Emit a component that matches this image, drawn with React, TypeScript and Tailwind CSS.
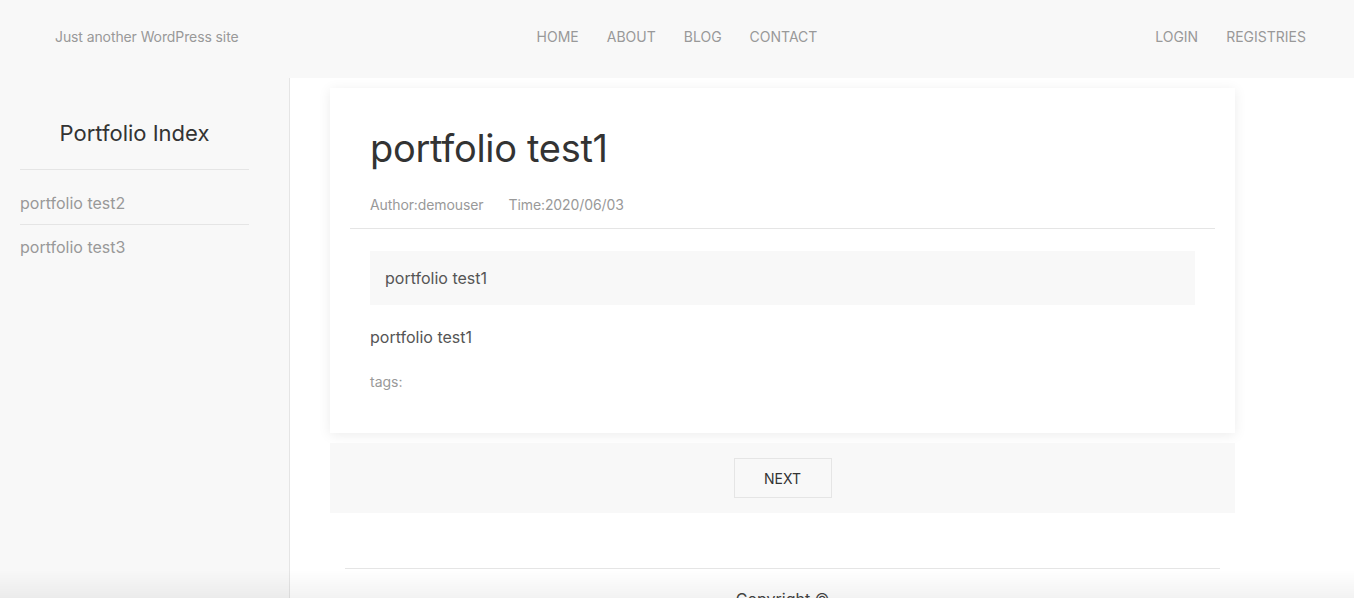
import type React from 'react'

const navLinks = ['HOME', 'ABOUT', 'BLOG', 'CONTACT']
const authLinks = ['LOGIN', 'REGISTRIES']
const portfolioItems = ['portfolio test2', 'portfolio test3']

const App: React.FC = () => {
  return (
    <div className="min-h-screen bg-white text-[#333]" style={{ fontFamily: 'Inter, "Noto Sans", sans-serif' }}>
      {/* Header */}
      <header className="grid h-[78px] grid-cols-3 items-center bg-[#f8f8f8] pb-[5px] text-[14px] leading-[20px] text-[#999]">
        <div className="pl-[55px] tracking-[-0.1px]">Just another WordPress site</div>
        <nav className="flex justify-center gap-[28px]">
          {navLinks.map((link) => (
            <a key={link} href="#" className="hover:text-[#333]">
              {link}
            </a>
          ))}
        </nav>
        <div className="flex justify-end gap-[28px] pr-[48px]">
          {authLinks.map((link) => (
            <a key={link} href="#" className="hover:text-[#333]">
              {link}
            </a>
          ))}
        </div>
      </header>

      <div className="flex min-h-[520px]">
        {/* Sidebar */}
        <aside className="w-[290px] shrink-0 border-r border-[#e5e5e5] bg-[#f8f8f8] pl-[20px] pr-[40px]">
          <h2 className="flex h-[92px] items-center justify-center border-b border-[#e5e5e5] pt-[20px] text-[22px] text-[#333]">
            Portfolio Index
          </h2>
          <ul>
            {portfolioItems.map((item, i) => (
              <li
                key={item}
                className={`text-[16px] leading-[22px] text-[#999] ${i === 0 ? 'h-[55px] border-b border-[#e5e5e5] pt-[22px]' : 'pt-[11px]'}`}
              >
                {item}
              </li>
            ))}
          </ul>
        </aside>

        {/* Main */}
        <main className="flex-1 pl-[40px]">
          <article className="mt-[10px] w-[905px] bg-white pb-[41px] shadow-[0_2px_12px_rgba(0,0,0,0.08)]">
            <div className="mx-[20px] border-b border-[#e5e5e5] px-[20px] pb-[13px] pt-[36px]">
              <h1 className="text-[38px] leading-[48px] tracking-[-0.3px] text-[#333]">portfolio test1</h1>
              <div className="mt-[23px] flex gap-[25px] text-[14px] leading-[20px] tracking-[-0.1px] text-[#999]">
                <span>Author:demouser</span>
                <span>Time:2020/06/03</span>
              </div>
            </div>
            <div className="px-[40px] pt-[22px]">
              <div className="flex h-[54px] items-center bg-[#f8f8f8] px-[15px] text-[16px] text-[#555]">
                portfolio test1
              </div>
              <p className="mt-[21px] text-[16px] leading-[22px] text-[#555]">portfolio test1</p>
              <p className="mt-[24px] text-[14px] leading-[20px] text-[#999]">tags:</p>
            </div>
          </article>

          <div className="mt-[10px] flex h-[70px] w-[905px] items-center justify-center bg-[#f8f8f8]">
            <button className="h-[40px] w-[98px] border border-[#e5e5e5] text-[14px] text-[#333]">NEXT</button>
          </div>

          <footer className="mx-[15px] mt-[55px] w-[875px] border-t border-[#e5e5e5] pt-[18px] text-center text-[16px] text-[#444]">
            Copyright ©
          </footer>
        </main>
      </div>

      {/* bottom shade */}
      <div className="pointer-events-none fixed bottom-0 left-0 right-0 h-[28px] bg-gradient-to-b from-transparent to-black/[0.05]" />
    </div>
  )
}

export default App
